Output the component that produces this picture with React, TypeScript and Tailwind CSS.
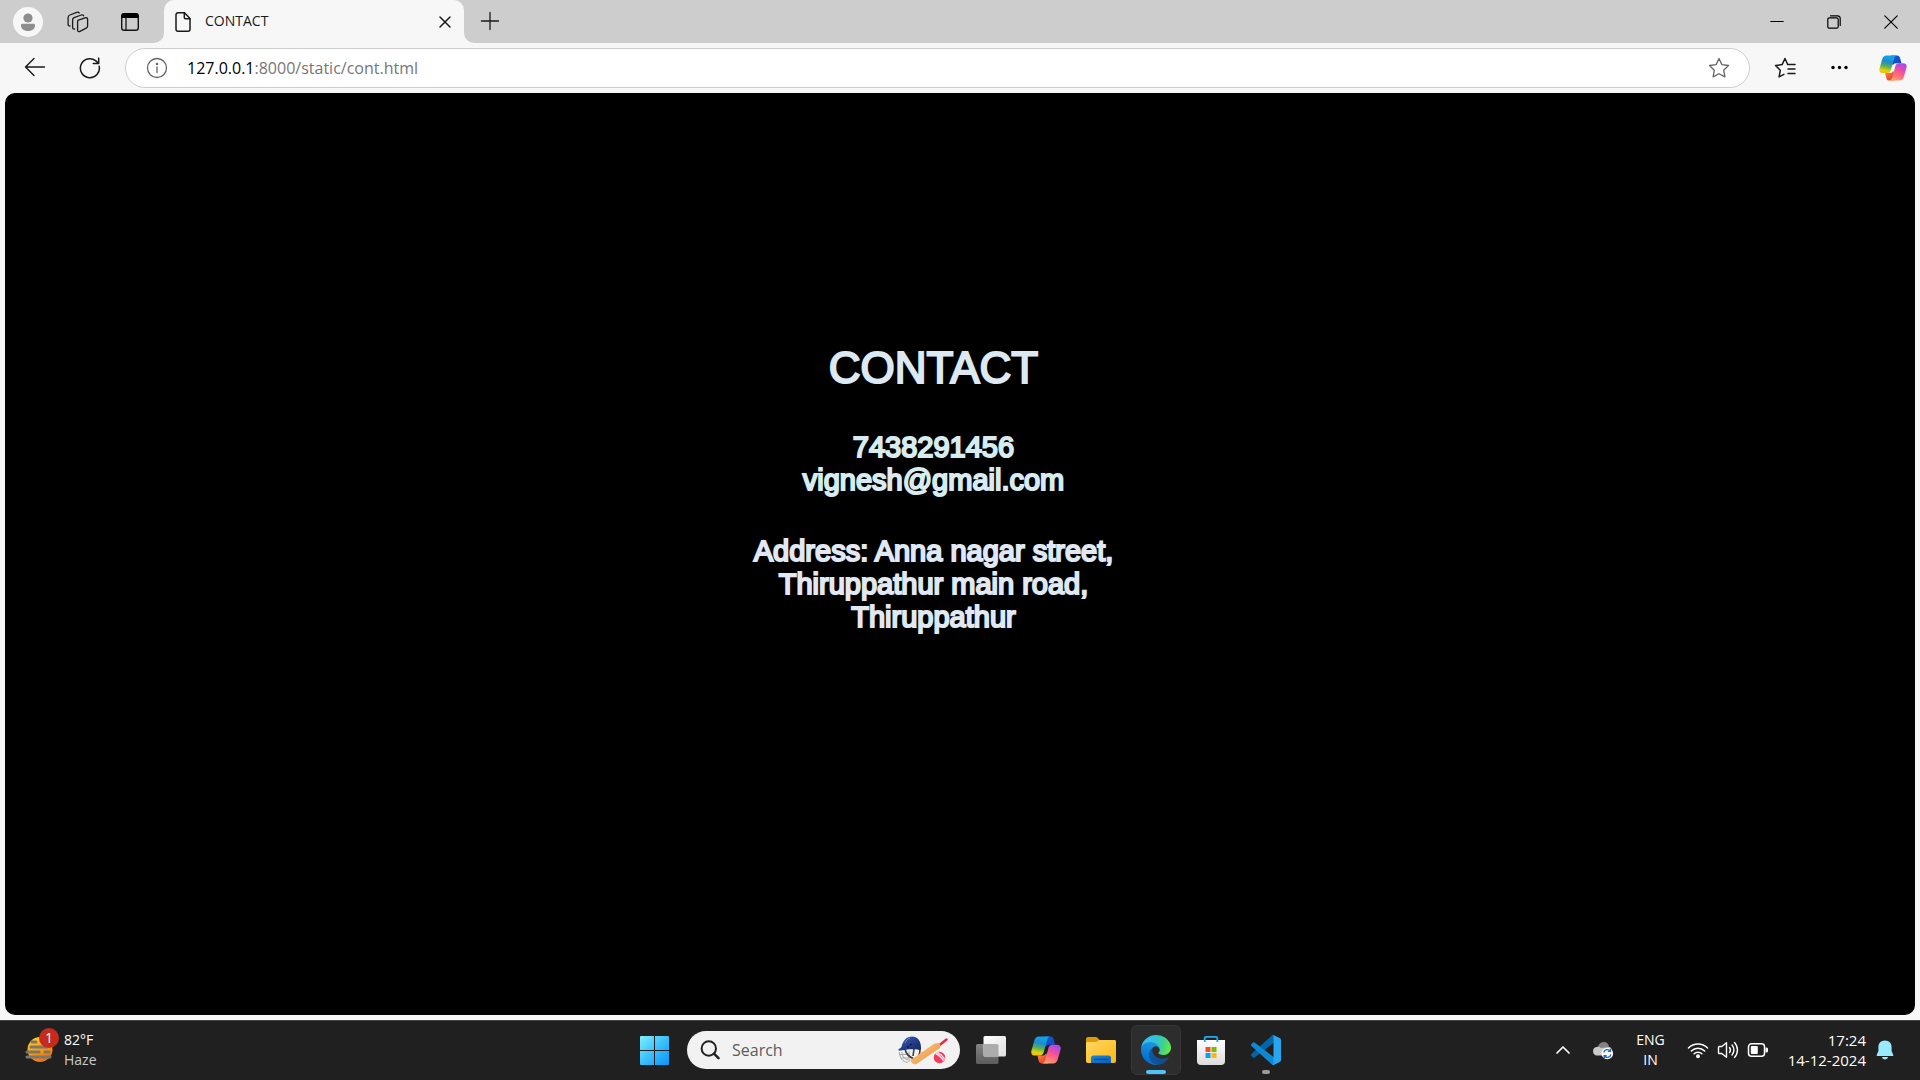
import type { ReactNode } from "react";

const line = { fill: "none", stroke: "currentColor", strokeLinecap: "round", strokeLinejoin: "round" } as const;

function CopilotIcon({ id, className }: { id: string; className: string }) {
  return (
    <svg viewBox="0 0 30 28" className={className} aria-hidden="true">
      <defs>
        <linearGradient id={id + "a"} x1="0.5" y1="0" x2="0.3" y2="1">
          <stop offset="0.1" stopColor="#12a0e8" />
          <stop offset="0.35" stopColor="#2389c9" />
          <stop offset="0.6" stopColor="#53b05c" />
          <stop offset="0.85" stopColor="#e8d000" />
          <stop offset="1" stopColor="#f0c010" />
        </linearGradient>
        <linearGradient id={id + "b"} x1="0.7" y1="0" x2="0.3" y2="1">
          <stop offset="0" stopColor="#a44af0" />
          <stop offset="0.4" stopColor="#ee4f9e" />
          <stop offset="0.7" stopColor="#ff6f7a" />
          <stop offset="1" stopColor="#ffa46a" />
        </linearGradient>
        <linearGradient id={id + "c"} x1="0" y1="0" x2="1" y2="1">
          <stop offset="0" stopColor="#0a64d8" />
          <stop offset="1" stopColor="#1a3fc4" />
        </linearGradient>
        <linearGradient id={id + "d"} x1="0" y1="0" x2="1" y2="1">
          <stop offset="0" stopColor="#f59a3c" />
          <stop offset="0.6" stopColor="#ef4a35" />
          <stop offset="1" stopColor="#ff8a50" />
        </linearGradient>
      </defs>
      <path d="M13 .5h6.500c1.700 0 2.600 1 3.100 2.800l1.500 5.500H18c-1.500 0-2.500.8-3 2.200L11 6z" fill={`url(#${id}c)`} />
      <path d="M6.500 19.500H12c1.500 0 2.500-.8 3-2.200L19 22l-2 5.500h-6c-1.800 0-2.800-1-3.300-2.800z" fill={`url(#${id}d)`} />
      <path d="M8 .5h11c-1.600.5-2.300 1.700-2.800 3.500L12.800 16c-.6 2.300-1.800 3.500-3.900 3.500H4c-3 0-4.300-2-3.500-5L3.300 4.500C4.200 1.800 5.500.5 8 .5z" fill={`url(#${id}a)`} />
      <path d="M22 27.500H11.500c1.600-.5 2.300-1.700 2.800-3.500l3.100-11.700c.6-2.300 1.800-3.500 3.900-3.500H26c3 0 4.300 2 3.500 5L26.700 23.500c-.9 2.700-2.200 4-4.700 4z" fill={`url(#${id}b)`} />
    </svg>
  );
}

function CricketArt() {
  return (
    <svg viewBox="0 0 50 30" className="h-[30px] w-[50px]" aria-hidden="true">
      <defs>
        <linearGradient id="helmet" x1="0" y1="0" x2="1" y2="1">
          <stop offset="0" stopColor="#4a68b8" />
          <stop offset="0.5" stopColor="#263f8b" />
          <stop offset="1" stopColor="#18275f" />
        </linearGradient>
        <linearGradient id="bat" x1="0" y1="0" x2="1" y2="1">
          <stop offset="0" stopColor="#ffcf90" />
          <stop offset="1" stopColor="#e68a33" />
        </linearGradient>
      </defs>
      <g fill="none" stroke="#a6a6a6" strokeWidth="1">
        <path d="M1.500 17c0 6 3 9.500 8 10.500M4 17c0 4 2 7 6 8M1.500 19.500h9M3 23h8M11 16v11" />
      </g>
      <path d="M7 14c1 5 4 8 9 10M22 14c0 4-1 7-3 9M16 14l-1 7" fill="none" stroke="#3c3c40" strokeWidth="1.600" />
      <path d="M.3 14.500C1.500 13.500 3 13 3.600 11.500 5 5.500 8.500 1.500 14 1.500c6 0 9.400 5 9 12.500-.6 1.200-2 1-3.500.6-6-.900-11-.3-18.500 1.200z" fill="url(#helmet)" />
      <path d="M7 8c1-2.500 2.500-4 5-5" stroke="#6d88cc" strokeWidth="1" fill="none" />
      <path d="M12 10l2-1M9 12l2-.5" stroke="#101d4c" strokeWidth="1.500" />
      <path d="M41 10.500l7.500-6" stroke="#df2a4b" strokeWidth="2.400" strokeLinecap="round" />
      <path d="M12.500 25L36.500 8.500l4-.5 2 2-.5 3L18 29.200c-2 .9-6-2.300-5.500-4.200z" fill="url(#bat)" />
      <circle cx="41.500" cy="22.500" r="5.800" fill="#f43b5c" />
      <path d="M37.500 18.300c3 1.500 6.500 4.500 8.300 7.600M39 17.300c3 1.400 6 4 8 7" stroke="#ffdbe6" strokeWidth="1.500" fill="none" />
    </svg>
  );
}

function EdgeIcon() {
  return (
    <svg viewBox="0 0 256 256" className="size-[30px]" aria-hidden="true">
      <defs>
        <linearGradient id="e1" x1="0" y1="0.5" x2="1" y2="0.5">
          <stop offset="0" stopColor="#0c59a4" />
          <stop offset="1" stopColor="#114a8b" />
        </linearGradient>
        <linearGradient id="e2" x1="0.6" y1="0" x2="0.4" y2="1">
          <stop offset="0" stopColor="#1b9de2" />
          <stop offset="0.5" stopColor="#0f7fd6" />
          <stop offset="1" stopColor="#0667c4" />
        </linearGradient>
        <linearGradient id="e3" x1="0" y1="0.4" x2="1" y2="0.6">
          <stop offset="0" stopColor="#35c1f1" />
          <stop offset="0.4" stopColor="#2fc3df" />
          <stop offset="0.7" stopColor="#3ccf93" />
          <stop offset="1" stopColor="#66eb45" />
        </linearGradient>
      </defs>
      <path d="M231 190.500c-3.400 1.800-6.900 3.400-10.500 4.700a101.700 101.700 0 0 1-35.900 6.500c-47.300 0-88.500-32.500-88.500-74.300a31.500 31.500 0 0 1 16.400-27.300c-42.800 1.800-53.800 46.400-53.800 72.500 0 74 68.100 81.400 82.800 81.400 7.900 0 19.800-2.300 27-4.600l1.300-.4a128.300 128.300 0 0 0 66.600-52.800 4 4 0 0 0-5.400-5.700z" fill="url(#e1)" />
      <path d="M105.700 241.400a79.200 79.200 0 0 1-22.700-21.300 80.700 80.700 0 0 1 29.500-120c3.200-1.500 8.500-4.200 15.600-4.100a32.400 32.400 0 0 1 25.700 13 31.900 31.900 0 0 1 6.300 18.700c0-.2 24.500-79.600-80-79.600-43.900 0-80 41.700-80 78.200a130.200 130.200 0 0 0 12.100 56 128 128 0 0 0 156.400 67.100 75.500 75.500 0 0 1-62.800-8z" fill="url(#e2)" />
      <path d="M152.300 148.900c-.8 1-3.300 2.500-3.300 5.700 0 2.600 1.700 5.100 4.700 7.200 14.400 10 41.500 8.700 41.600 8.700a59.600 59.600 0 0 0 30.300-8.300 61.400 61.400 0 0 0 30.400-52.900c.3-22.400-8-37.300-11.300-43.900C223.500 23.900 177.700 0 128 0A128 128 0 0 0 0 126.200c.5-36.500 36.800-66 80-66 3.500 0 23.500.3 42 10a72.600 72.600 0 0 1 30.900 29.300c6.100 10.600 7.200 24.100 7.200 29.500s-2.700 13.300-7.800 19.900z" fill="url(#e3)" />
    </svg>
  );
}

function StoreIcon() {
  return (
    <svg viewBox="0 0 30 30" className="size-[30px]" aria-hidden="true">
      <defs>
        <linearGradient id="bag" x1="0" y1="0" x2="0" y2="1">
          <stop offset="0" stopColor="#ffffff" />
          <stop offset="1" stopColor="#dcdcdc" />
        </linearGradient>
      </defs>
      <path d="M1 5h28v21a4 4 0 0 1-4 4H5a4 4 0 0 1-4-4z" fill="url(#bag)" />
      <path d="M8.700 7V3a1.200 1.200 0 0 1 1.200-1.200h10.200A1.200 1.200 0 0 1 21.300 3v4" fill="none" stroke="#22a9e8" strokeWidth="1.800" />
      <path d="M9.500 12h5v5h-5z" fill="#f25022" />
      <path d="M15.500 12h5v5h-5z" fill="#7fba00" />
      <path d="M9.500 18h5v5h-5z" fill="#00a4ef" />
      <path d="M15.500 18h5v5h-5z" fill="#ffb900" />
    </svg>
  );
}

function CodeIcon() {
  return (
    <svg viewBox="0 0 100 100" className="size-[30px]" aria-hidden="true">
      <path d="M96.500 10.800L75.900.9a6.200 6.200 0 0 0-7.100 1.200L1.300 63.600a4.200 4.200 0 0 0 0 6.200l5.500 5a4.200 4.200 0 0 0 5.300.2l81.200-61.600c2.700-2 6.700-.1 6.700 3.300v-.3a6.200 6.200 0 0 0-3.500-5.600z" fill="#0065a9" />
      <path d="M96.500 89.200l-20.600 9.900a6.200 6.200 0 0 1-7.100-1.200L1.300 36.400a4.200 4.200 0 0 1 0-6.200l5.500-5a4.200 4.200 0 0 1 5.300-.2l81.200 61.600c2.700 2 6.700.1 6.700-3.300v.3a6.200 6.200 0 0 1-3.500 5.600z" fill="#0f88d2" />
      <path d="M75.900 99.100a6.200 6.200 0 0 1-7.100-1.200c2.300 2.300 6.200.7 6.200-2.600V4.700c0-3.300-3.900-4.900-6.200-2.600A6.200 6.200 0 0 1 75.900.9l20.600 9.900a6.200 6.200 0 0 1 3.500 5.600v67.200a6.200 6.200 0 0 1-3.500 5.600z" fill="#2aa5f0" />
    </svg>
  );
}

function FolderIcon() {
  return (
    <svg viewBox="0 0 30 28" className="h-[28px] w-[30px]" aria-hidden="true">
      <defs>
        <linearGradient id="fold" x1="0" y1="0" x2="1" y2="1">
          <stop offset="0" stopColor="#ffd766" />
          <stop offset="1" stopColor="#fbb910" />
        </linearGradient>
        <linearGradient id="tray" x1="0" y1="0" x2="1" y2="1">
          <stop offset="0" stopColor="#1787dd" />
          <stop offset="1" stopColor="#0a5fb8" />
        </linearGradient>
      </defs>
      <path d="M0 3a2 2 0 0 1 2-2h7.500c1 0 1.500.3 2.200 1l2 2v5H0z" fill="#dc9a08" />
      <path d="M0 7.500C0 6.300.8 6 2 6h7c1.500 0 2.200-.4 3-1.200.6-.6 1.200-.8 2-.8h14.500c1 0 1.500.6 1.500 1.500V25c0 1.200-.8 2-2 2H2c-1.200 0-2-.8-2-2z" fill="url(#fold)" />
      <path d="M5 27v-5a2.500 2.500 0 0 1 2.500-2.500h15A2.500 2.500 0 0 1 25 22v5z" fill="url(#tray)" />
      <path d="M8.500 23.400h13" stroke="#0b4a8e" strokeWidth="1.200" strokeLinecap="round" />
    </svg>
  );
}

function TaskButton({ label, active, children }: { label: string; active?: boolean; children: ReactNode }) {
  return (
    <button
      aria-label={label}
      className={
        active
          ? "relative flex size-[50px] items-center justify-center rounded-md border border-[#363636] bg-[#2d2d2d]"
          : "relative flex size-[50px] items-center justify-center rounded-md"
      }
    >
      {children}
    </button>
  );
}

function TabStrip() {
  return (
    <header className="flex h-[43px] bg-[#cdcdcd]">
      <div className="flex w-[164px] shrink-0 items-center pl-[13px]">
        <button aria-label="Profile" className="flex size-[30px] items-center justify-center rounded-full bg-[#f7f7f7]">
          <svg viewBox="0 0 30 30" className="size-[30px]" aria-hidden="true">
            <circle cx="15" cy="11" r="4.600" fill="#8d8d8d" />
            <path d="M8 18.500c0-1.200.6-1.700 1.600-1.700h10.800c1 0 1.600.5 1.600 1.700 0 3.400-3 5.500-7 5.500s-7-2.100-7-5.500z" fill="#8d8d8d" />
          </svg>
        </button>
        <button aria-label="Workspaces" className="ml-6 flex size-[22px] items-center justify-center">
          <svg viewBox="0 0 22 22" className="size-[22px]" {...line} strokeWidth="1.300" aria-hidden="true">
            <path d="M10.800 9.300l7.200-2.500c1.500-.5 2.600.2 2.600 1.600v6.600c0 1-.4 1.700-1.400 2.100l-6.300 3.200c-1.400.7-2.300.1-2.300-1.300v-8c0-.9.100-1.300.2-1.700z" />
            <path d="M7.600 18c-1.200.3-2-.3-2-1.500V9c0-1.300.4-2 1.500-2.400l7.200-2.600c1.200-.4 2 0 2.300.8" />
            <path d="M3 15c-1.200 0-1.900-.5-1.900-1.600V6.500c0-1.300.5-2.100 1.700-2.500l7-2.600c1.200-.4 2-.2 2.400.6" />
          </svg>
        </button>
        <button aria-label="Tab actions" className="ml-[31px] flex size-[20px] items-center justify-center">
          <svg viewBox="0 0 20 20" className="size-[20px]" aria-hidden="true">
            <rect x="1.700" y="1.700" width="16.600" height="16.600" rx="2.600" fill="none" stroke="#111" strokeWidth="1.400" />
            <path d="M1.500 6V4a3 3 0 0 1 3-3h11a3 3 0 0 1 3 3v2z" fill="#000" />
            <path d="M6 6v12" stroke="#111" strokeWidth="1.300" />
          </svg>
        </button>
      </div>
      <div className="relative flex w-[300px] items-center rounded-t-[10px] bg-[#f7f7f7] pl-[10px] pr-[12px]">
        <svg viewBox="0 0 10 10" className="absolute -left-[10px] bottom-0 size-[10px] fill-[#f7f7f7]" aria-hidden="true">
          <path d="M10 0v10H0A10 10 0 0 0 10 0z" />
        </svg>
        <svg viewBox="0 0 10 10" className="absolute -right-[10px] bottom-0 size-[10px] fill-[#f7f7f7]" aria-hidden="true">
          <path d="M0 0v10h10A10 10 0 0 1 0 0z" />
        </svg>
        <svg viewBox="0 0 18 22" className="h-[22px] w-[18px]" {...line} strokeWidth="1.500" aria-hidden="true">
          <path d="M4 1.800h6.500L16 7.500v10.800a2 2 0 0 1-2 2H4a2 2 0 0 1-2-2V3.800a2 2 0 0 1 2-2z" />
          <path d="M10.300 2v4.400a1.300 1.300 0 0 0 1.300 1.300H16" />
        </svg>
        <span className="mb-[2px] ml-[13px] grow text-sm">CONTACT</span>
        <button aria-label="Close tab" className="mt-px">
          <svg viewBox="0 0 14 14" className="size-[14px]" {...line} strokeWidth="1.500" aria-hidden="true">
            <path d="M2 2l10 10M12 2L2 12" />
          </svg>
        </button>
      </div>
      <button aria-label="New tab" className="mb-px ml-[16px]">
        <svg viewBox="0 0 20 20" className="size-[20px]" {...line} strokeWidth="1.300" aria-hidden="true">
          <path d="M1.500 10h17M10 1.500v17" />
        </svg>
      </button>
      <div className="ml-auto flex items-center text-black">
        <button aria-label="Minimise" className="flex h-full w-[57px] items-center justify-center">
          <svg viewBox="0 0 14 14" className="size-[14px]" {...line} strokeWidth="1.200" aria-hidden="true">
            <path d="M.8 6.500h12.400" />
          </svg>
        </button>
        <button aria-label="Restore" className="flex h-full w-[57px] items-center justify-center">
          <svg viewBox="0 0 14 14" className="size-[14px]" {...line} strokeWidth="1.200" aria-hidden="true">
            <rect x="0.800" y="2.800" width="10.400" height="10.400" rx="1.500" />
            <path d="M3.500.8h7.200a2.500 2.500 0 0 1 2.500 2.500v7.200" />
          </svg>
        </button>
        <button aria-label="Close window" className="flex h-full w-[58px] items-center justify-center">
          <svg viewBox="0 0 14 14" className="size-[14px]" {...line} strokeWidth="1.200" aria-hidden="true">
            <path d="M.8.8l12.400 12.400M13.200.8L.8 13.200" />
          </svg>
        </button>
      </div>
    </header>
  );
}

const star = "M11 1.500l2.900 6.100 6.600.9-4.800 4.700 1.200 6.700-5.900-3.200-5.900 3.200 1.200-6.700L1.500 8.500l6.600-.9z";

function Toolbar() {
  return (
    <div className="flex h-[50px] items-center pl-6 pr-[13px]">
      <button aria-label="Back" className="mb-[2px]">
        <svg viewBox="0 0 22 20" className="h-[20px] w-[22px]" {...line} strokeWidth="1.400" aria-hidden="true">
          <path d="M20.500 10H1.500M10 1.500L1.500 10l8.500 8.500" />
        </svg>
      </button>
      <button aria-label="Refresh" className="ml-[33px]">
        <svg viewBox="0 0 22 22" className="size-[22px]" {...line} strokeWidth="1.500" aria-hidden="true">
          <path d="M20.200 9.300A9.500 9.500 0 1 1 16.600 3.600l3 2.900M19.700 1.300v5.300h-5.400" />
        </svg>
      </button>
      <div className="ml-6 flex h-10 grow items-center rounded-full border border-[#cfcfcf] bg-white pl-[20px] pr-[19px]">
        <button aria-label="Site information" className="text-[#666]">
          <svg viewBox="0 0 22 22" className="size-[22px]" {...line} strokeWidth="1.300" aria-hidden="true">
            <circle cx="11" cy="11" r="9.500" />
            <path d="M11 10v5.500" />
            <circle cx="11" cy="7" r="0.600" fill="currentColor" />
          </svg>
        </button>
        <a href="#address" className="ml-[19px] grow text-base text-[#767676]">
          <span className="text-black">127.0.0.1</span>:8000/static/cont.html
        </a>
        <button aria-label="Add to favourites" className="text-[#666]">
          <svg viewBox="0 0 22 22" className="size-[22px]" {...line} strokeWidth="1.300" aria-hidden="true">
            <path d={star} />
          </svg>
        </button>
      </div>
      <button aria-label="Favourites" className="ml-6">
        <svg viewBox="0 0 22 22" className="size-[22px]" {...line} strokeWidth="1.500" aria-hidden="true">
          <path d="M15.500 7.400l-1.900-.2L11 1.500 8.100 7.600l-6.600.9 4.800 4.700-1.200 6.700 4.800-2.600M13.500 7.500h7.500M14 12h7M14 16.500h7" />
        </svg>
      </button>
      <button aria-label="Settings and more" className="ml-[33px]">
        <svg viewBox="0 0 22 22" className="size-[22px] fill-black" aria-hidden="true">
          <circle cx="4" cy="10.500" r="1.700" />
          <circle cx="10.500" cy="10.500" r="1.700" />
          <circle cx="17" cy="10.500" r="1.700" />
        </svg>
      </button>
      <button aria-label="Copilot" className="ml-[28px]">
        <CopilotIcon id="top" className="h-[26px] w-[28px]" />
      </button>
    </div>
  );
}

function ContactPage() {
  return (
    <main className="mx-[5px] mb-[5px] flex grow flex-col items-center rounded-[10px] bg-black pr-[53px] pt-[250px] text-center font-['Liberation_Sans',Arial,sans-serif]">
      <h1 className="text-[44px] leading-[50px] text-[#dce8f2] [-webkit-text-stroke:2px_#dce8f2]">CONTACT</h1>
      <p className="mt-[38px] text-[29px] leading-[33px] text-[#d8ecf0] [-webkit-text-stroke:2px_#d8ecf0]">
        7438291456
        <br />
        vignesh@gmail.com
      </p>
      <p className="mt-[38px] text-[29px] leading-[33px] text-[#e0e8f4] [-webkit-text-stroke:2px_#e0e8f4]">
        Address: Anna nagar street,
        <br />
        Thiruppathur main road,
        <br />
        Thiruppathur
      </p>
    </main>
  );
}

function Taskbar() {
  return (
    <footer className="grid h-[60px] grid-cols-[1fr_auto_1fr] items-center border-t border-[#454545] bg-[#202020] pb-px text-white">
      <button className="ml-[24px] flex w-fit items-center text-left text-sm leading-5">
        <svg viewBox="0 0 36 44" className="h-[44px] w-[36px]" aria-hidden="true">
          <defs>
            <linearGradient id="sun" x1="0.2" y1="0" x2="0.7" y2="1">
              <stop offset="0" stopColor="#ffd21c" />
              <stop offset="1" stopColor="#ee6a0a" />
            </linearGradient>
          </defs>
          <circle cx="16" cy="21.500" r="12.500" fill="url(#sun)" />
          <path d="M8 14h4M7 19h16M3 24h12M21 24h4M3 29h23" stroke="#7b7770" strokeWidth="3" strokeLinecap="round" />
          <circle cx="25" cy="10" r="10" fill="#c42b1c" />
          <text x="25" y="15" textAnchor="middle" fontSize="14" fill="#fff">1</text>
        </svg>
        <span className="ml-1">
          <span className="block">82°F</span>
          <span className="block text-[#c8c8c8]">Haze</span>
        </span>
      </button>
      <nav aria-label="Taskbar" className="flex items-center">
        <TaskButton label="Start">
          <svg viewBox="0 0 29 29" className="size-[29px]" aria-hidden="true">
            <defs>
              <linearGradient id="win" gradientUnits="userSpaceOnUse" x1="0" y1="0" x2="29" y2="29">
                <stop offset="0" stopColor="#7df0ff" />
                <stop offset="0.5" stopColor="#3cc0fb" />
                <stop offset="1" stopColor="#0a93f8" />
              </linearGradient>
            </defs>
            <path d="M1 0h13v14H0V1a1 1 0 0 1 1-1zM15 0h13a1 1 0 0 1 1 1v13H15zM0 15h14v14H1a1 1 0 0 1-1-1zM15 15h14v13a1 1 0 0 1-1 1H15z" fill="url(#win)" />
          </svg>
        </TaskButton>
        <label className="ml-2 mr-[6px] flex h-[38px] w-[273px] items-center rounded-full bg-[#f2f2f2] pl-[13px] pr-[12px]">
          <svg viewBox="0 0 20 20" className="size-[20px] shrink-0 text-[#222]" {...line} strokeWidth="2" aria-hidden="true">
            <circle cx="8.800" cy="8.500" r="7.200" />
            <path d="M14 13.700l4.500 4.500" strokeWidth="2.500" />
          </svg>
          <input
            type="text"
            aria-label="Search"
            placeholder="Search"
            className="ml-[12px] w-0 grow bg-transparent text-base text-black outline-none placeholder:text-[#5c5c5c]"
          />
          <CricketArt />
        </label>
        <div className="flex gap-[5px]">
          <TaskButton label="Task view">
            <svg viewBox="0 0 30 28" className="h-[28px] w-[30px]" aria-hidden="true">
              <defs>
                <linearGradient id="pane" x1="0" y1="0" x2="1" y2="1">
                  <stop offset="0" stopColor="#ffffff" />
                  <stop offset="1" stopColor="#dedede" />
                </linearGradient>
                <linearGradient id="back" x1="0" y1="0" x2="0" y2="1">
                  <stop offset="0" stopColor="#858585" />
                  <stop offset="1" stopColor="#5c5c5c" />
                </linearGradient>
              </defs>
              <rect x="0" y="8" width="22.500" height="20" rx="1.500" fill="url(#back)" />
              <rect x="7.500" y="0" width="22.500" height="20.500" rx="1.500" fill="url(#pane)" />
              <path d="M7.500 8H21a1.500 1.500 0 0 1 1.500 1.500v11H9A1.500 1.500 0 0 1 7.500 19z" fill="#acacac" />
            </svg>
          </TaskButton>
          <TaskButton label="Copilot">
            <CopilotIcon id="bar" className="h-[28px] w-[30px]" />
          </TaskButton>
          <TaskButton label="File Explorer">
            <FolderIcon />
          </TaskButton>
          <TaskButton label="Microsoft Edge" active>
            <EdgeIcon />
            <span className="absolute bottom-0 h-1 w-5 rounded-full bg-[#4cc2ff]" />
          </TaskButton>
          <TaskButton label="Microsoft Store">
            <StoreIcon />
          </TaskButton>
          <TaskButton label="Visual Studio Code">
            <CodeIcon />
            <span className="absolute bottom-px h-1 w-2 rounded-full bg-[#9a9a9a]" />
          </TaskButton>
        </div>
      </nav>
      <div className="flex items-center justify-end pr-[26px] text-[15px] leading-5">
        <button aria-label="Show hidden icons">
          <svg viewBox="0 0 16 16" className="size-4" {...line} strokeWidth="1.700" aria-hidden="true">
            <path d="M2 11l6-6 6 6" />
          </svg>
        </button>
        <button aria-label="OneDrive" className="ml-[21px]">
          <svg viewBox="0 0 22 20" className="h-[20px] w-[22px]" aria-hidden="true">
            <path d="M6 6.500C7 3.500 9.200 2 11.800 2c3 0 4.800 2 5.200 4.500v6L6 9z" fill="#828282" />
            <path d="M5 15.500a4.300 4.300 0 0 1-.5-8.500c1.500-.4 3.300 0 4.500 1l8.500-1c1.500.6 2.500 2.200 2.500 4v4.500z" fill="#c9c9c9" />
            <circle cx="15.300" cy="13.500" r="5.800" fill="#fff" />
            <path d="M11.700 12.500a3.800 3.800 0 0 1 6.600-1.500M18.900 14.500a3.800 3.800 0 0 1-6.600 1.500M18.500 8.700v2.600h-2.600M12.100 18.300v-2.600h2.600" fill="none" stroke="#1a6fc9" strokeWidth="1.300" />
          </svg>
        </button>
        <button aria-label="Input language" className="ml-[22px] text-center text-sm leading-5">
          ENG
          <br />
          IN
        </button>
        <button aria-label="Network, volume and battery" className="ml-[22px] flex items-center gap-2">
          <svg viewBox="0 0 22 18" className="h-[18px] w-[22px]" {...line} strokeWidth="1.500" aria-hidden="true">
            <path d="M1.500 7a13.500 13.500 0 0 1 19 0M4.300 10a9.500 9.500 0 0 1 13.400 0M7.100 12.800a5.500 5.500 0 0 1 7.800 0" />
            <circle cx="11" cy="15.300" r="1.200" fill="currentColor" />
          </svg>
          <svg viewBox="0 0 22 20" className="h-[20px] w-[22px]" {...line} strokeWidth="1.400" aria-hidden="true">
            <path d="M1.500 7.300c0-.5.300-.8.800-.8h2.500L9.500 2.700v14.600l-4.700-3.800H2.300c-.5 0-.8-.3-.8-.8zM12.500 7.500a4 4 0 0 1 0 5M15 5a7.500 7.500 0 0 1 0 10M17.500 2.500a11 11 0 0 1 0 15" />
          </svg>
          <svg viewBox="0 0 22 16" className="h-[16px] w-[22px]" aria-hidden="true">
            <rect x="1.500" y="1.800" width="16" height="12.400" rx="3" fill="none" stroke="#fff" strokeWidth="1.500" />
            <rect x="3.800" y="4" width="7" height="8" rx="1" fill="#fff" />
            <path d="M18.500 5.500h1a1.500 1.500 0 0 1 1.500 1.500v2a1.500 1.500 0 0 1-1.500 1.500h-1z" fill="#fff" />
          </svg>
        </button>
        <button className="ml-[19px] text-right leading-5">
          17:24
          <br />
          14-12-2024
        </button>
        <button aria-label="Notifications" className="ml-[10px]">
          <svg viewBox="0 0 18 20" className="h-[20px] w-[18px] fill-[#99e9ff]" aria-hidden="true">
            <path d="M9 .5c4 0 6.600 2.800 6.600 6.500v4l1.600 3.700c.3.700 0 1.300-.8 1.300H1.600c-.8 0-1.100-.6-.8-1.300L2.400 11V7C2.400 3.300 5 .5 9 .5zM6 17h6c-.3 1.600-1.400 2.500-3 2.500S6.300 18.600 6 17z" />
          </svg>
        </button>
      </div>
    </footer>
  );
}

export default function App() {
  return (
    <div className="flex min-h-screen flex-col bg-[#f7f7f7] font-['Open_Sans','Noto_Sans',sans-serif] text-[#1a1a1a]">
      <TabStrip />
      <Toolbar />
      <ContactPage />
      <Taskbar />
    </div>
  );
}
